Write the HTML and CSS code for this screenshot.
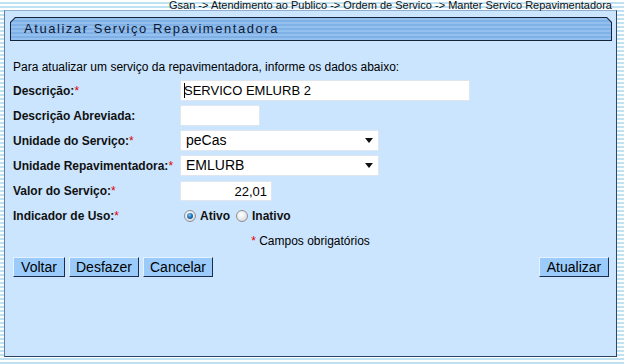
FILE: index.html
```html
<!DOCTYPE html>
<html lang="pt">
<head>
<meta charset="utf-8">
<title>Atualizar Serviço Repavimentadora</title>
<link rel="stylesheet" href="styles.css">
</head>
<body>
<div class="crumb">Gsan -&gt; Atendimento ao Publico -&gt; Ordem de Servico -&gt; Manter Servico Repavimentadora</div>
<div class="panel">
  <div class="titlebar"><div class="titlebar-in">Atualizar Serviço Repavimentadora</div></div>
  <p class="intro">Para atualizar um serviço da repavimentadora, informe os dados abaixo:</p>
  <div class="form">
    <div class="label">Descrição:<span class="req">*</span></div>
    <div class="field"><div class="input w-desc"><span class="caret"></span>SERVICO EMLURB 2</div></div>

    <div class="label">Descrição Abreviada:</div>
    <div class="field"><div class="input w-short"></div></div>

    <div class="label">Unidade do Serviço:<span class="req">*</span></div>
    <div class="field"><div class="input select w-sel"><span>peCas</span><svg class="arrow" width="8" height="5" viewBox="0 0 8 5"><path d="M0 0H8L4 5Z" fill="#111"/></svg></div></div>

    <div class="label">Unidade Repavimentadora:<span class="req">*</span></div>
    <div class="field"><div class="input select w-sel"><span>EMLURB</span><svg class="arrow" width="8" height="5" viewBox="0 0 8 5"><path d="M0 0H8L4 5Z" fill="#111"/></svg></div></div>

    <div class="label">Valor do Serviço:<span class="req">*</span></div>
    <div class="field"><div class="input w-val num">22,01</div></div>

    <div class="label">Indicador de Uso:<span class="req">*</span></div>
    <div class="field radios">
      <span class="radio checked"></span><span class="rlabel">Ativo</span>
      <span class="radio"></span><span class="rlabel">Inativo</span>
    </div>
  </div>
  <div class="note"><span class="req">*</span> Campos obrigatórios</div>
  <div class="actions">
    <div class="group">
      <button class="btn w-52">Voltar</button>
      <button class="btn">Desfazer</button>
      <button class="btn">Cancelar</button>
    </div>
    <button class="btn">Atualizar</button>
  </div>
</div>
</body>
</html>
```

FILE: styles.css
```css
html, body {
  margin: 0;
  padding: 0;
}
body {
  width: 624px;
  height: 364px;
  overflow: hidden;
  font-family: "Liberation Sans", Arial, sans-serif;
  color: #000;
  background: repeating-linear-gradient(to bottom, #ffffff 0, #ffffff 2px, #bfe2f2 2px, #bfe2f2 4px);
}
.crumb {
  height: 10px;
  line-height: 10px;
  font-size: 11px;
  text-align: right;
  padding-right: 12px;
  color: #111;
  white-space: nowrap;
}
.panel {
  box-sizing: border-box;
  width: 613px;
  height: 347px;
  margin-left: 4px;
  background: #cbe5fe;
  border: 1px solid #2c4566;
  border-top-color: #8eaed0;
  border-left-color: #5f7fa3;
  display: flex;
  flex-direction: column;
}
.titlebar {
  margin: 6px 4px 0 5px;
  height: 24px;
  box-sizing: border-box;
  padding: 1px;
  background: #16243a;
  clip-path: polygon(5px 0, calc(100% - 5px) 0, 100% 5px, 100% 100%, 0 100%, 0 5px);
}
.titlebar-in {
  height: 100%;
  box-sizing: border-box;
  padding-left: 13px;
  line-height: 22px;
  font-size: 13px;
  letter-spacing: 1.55px;
  color: #0e1a33;
  background: repeating-linear-gradient(to bottom, #94c0ef 0, #94c0ef 2px, #7fb0e6 2px, #7fb0e6 4px);
  clip-path: polygon(4.5px 0, calc(100% - 4.5px) 0, 100% 4.5px, 100% 100%, 0 100%, 0 4.5px);
}
.intro {
  margin: 19px 0 4px 8px;
  font-size: 12px;
  line-height: 14px;
}
.form {
  display: grid;
  grid-template-columns: 167px 1fr;
  grid-auto-rows: 25px;
  align-items: center;
  padding-left: 8px;
}
.label {
  font-size: 12px;
  font-weight: bold;
  color: #111;
}
.req {
  color: #e00000;
  font-weight: normal;
}
.field {
  display: flex;
  align-items: center;
}
.input {
  box-sizing: border-box;
  height: 21px;
  background: #fff;
  border: 1px solid #dfe6ee;
  border-radius: 1px;
  font-size: 13px;
  line-height: 19px;
  padding-left: 3px;
  white-space: nowrap;
  position: relative;
}
.caret {
  display: inline-block;
  width: 1px;
  height: 15px;
  background: #000;
  vertical-align: -3px;
  margin-right: -1px;
}
.w-desc { width: 290px; }
.w-short { width: 80px; }
.w-sel {
  width: 199px;
  height: 21px;
  display: flex;
  align-items: center;
  justify-content: space-between;
  padding: 0 5px 0 5px;
  font-size: 14px;
}
.w-val {
  width: 92px;
  height: 20px;
  text-align: right;
  padding-right: 4px;
}
.arrow {
  display: block;
}
.radios {
  gap: 0;
  font-size: 12px;
  font-weight: bold;
}
.radio {
  box-sizing: border-box;
  width: 12px;
  height: 12px;
  border-radius: 50%;
  border: 1px solid #8d8f93;
  background: radial-gradient(circle at 40% 35%, #ffffff 0, #e6e8ec 55%, #c4c8cf 100%);
  margin-left: 4px;
  margin-right: 4px;
  position: relative;
}
.radio.checked::after {
  content: "";
  position: absolute;
  left: 2px;
  top: 2px;
  width: 6px;
  height: 6px;
  border-radius: 50%;
  background: radial-gradient(circle at 40% 35%, #7fc4f5 0, #1f6fb4 50%, #0c3f78 100%);
}
.rlabel {
  margin-right: 2px;
  color: #111;
}
.note {
  margin-top: 6px;
  text-align: center;
  font-size: 12px;
  line-height: 14px;
}
.actions {
  margin-top: 9px;
  padding: 0 7px 0 8px;
  display: flex;
  justify-content: space-between;
  align-items: center;
}
.group {
  display: flex;
  gap: 4px;
}
.btn {
  box-sizing: border-box;
  width: 70px;
  height: 20px;
  padding: 0;
  margin: 0;
  font-family: "Liberation Sans", Arial, sans-serif;
  font-size: 14px;
  line-height: 16px;
  color: #000;
  background: #9acbfa;
  border: 1px solid;
  border-color: #e4f1ff #1c2c4c #1c2c4c #e4f1ff;
  border-radius: 0;
}
.w-52 { width: 52px; }
```
